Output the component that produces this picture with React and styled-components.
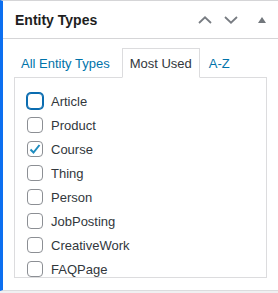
import React from "react";
import styled, { createGlobalStyle } from "styled-components";

const GlobalStyle = createGlobalStyle`
  html, body {
    margin: 0;
    padding: 0;
    background: #f0f0f1;
  }
  body {
    font-family: "Liberation Sans", Arial, sans-serif;
  }
`;

const types = [
  { name: "Article", focused: true },
  { name: "Product" },
  { name: "Course", checked: true },
  { name: "Thing" },
  { name: "Person" },
  { name: "JobPosting" },
  { name: "CreativeWork" },
  { name: "FAQPage" },
];

const App = () => {
  return (
    <>
      <GlobalStyle />
      <Box>
        <Header>
          <Title>Entity Types</Title>
          <Controls>
            <IconButton aria-label="Move up">
              <svg width="14" height="8" viewBox="0 0 14 8">
                <polyline points="1,7 7,1.3 13,7" fill="none" stroke="currentColor" strokeWidth="1.8" />
              </svg>
            </IconButton>
            <IconButton aria-label="Move down">
              <svg width="14" height="8" viewBox="0 0 14 8">
                <polyline points="1,1 7,6.7 13,1" fill="none" stroke="currentColor" strokeWidth="1.8" />
              </svg>
            </IconButton>
            <IconButton aria-label="Toggle panel" $small>
              <svg width="8" height="6" viewBox="0 0 8 6">
                <polygon points="4,0 8,6 0,6" fill="currentColor" />
              </svg>
            </IconButton>
          </Controls>
        </Header>
        <Body>
          <Tabs>
            <Tab>All Entity Types</Tab>
            <Tab $active>Most Used</Tab>
            <Tab>A-Z</Tab>
          </Tabs>
          <Panel>
            {types.map((t) => (
              <Row key={t.name}>
                <Check $focused={t.focused}>
                  {t.checked && (
                    <svg width="14" height="14" viewBox="0 0 14 14">
                      <polyline points="2.5,7.5 5.5,10.5 11.5,3" fill="none" stroke="#1e8cbe" strokeWidth="2" />
                    </svg>
                  )}
                </Check>
                <Label>{t.name}</Label>
              </Row>
            ))}
          </Panel>
        </Body>
      </Box>
    </>
  );
};

const Box = styled.div`
  background: #fff;
  border-left: 3px solid #0c6ff0;
  border-top: 1px solid #d5d5d7;
  border-bottom: 1px solid #dcdcde;
`;
const Header = styled.div`
  height: 37px;
  display: flex;
  align-items: center;
  justify-content: space-between;
  padding: 0 12px 0 12px;
  border-bottom: 1px solid #d5d5d7;
`;
const Title = styled.h2`
  margin: 0;
  font-size: 14px;
  font-weight: 700;
  color: #1e1e1e;
`;
const Controls = styled.div`
  display: flex;
  align-items: center;
  gap: 12px;
`;
const IconButton = styled.button`
  border: 0;
  background: none;
  padding: 0;
  margin-left: ${(p) => (p.$small ? "8px" : "0")};
  color: ${(p) => (p.$small ? "#72777c" : "#787c82")};
  display: flex;
  align-items: center;
`;
const Body = styled.div`
  padding: 9px 11px 12px 11px;
`;
const Tabs = styled.div`
  display: flex;
  align-items: flex-end;
  gap: 2px;
`;
const Tab = styled.div`
  height: 28px;
  display: flex;
  align-items: center;
  padding: 0 ${(p) => (p.$active ? "7px" : "6px")};
  margin-left: ${(p) => (p.$active ? "3px" : "0")};
  font-size: 13px;
  color: ${(p) => (p.$active ? "#32373c" : "#0073aa")};
  border: 1px solid ${(p) => (p.$active ? "#dcdcde" : "transparent")};
  border-bottom: 1px solid ${(p) => (p.$active ? "#fff" : "transparent")};
  margin-bottom: -1px;
  background: ${(p) => (p.$active ? "#fff" : "transparent")};
  position: relative;
  z-index: 1;
`;
const Panel = styled.div`
  height: 188px;
  overflow: hidden;
  border: 1px solid #dcdcde;
  padding: 11px 12px 0 12px;
`;
const Row = styled.div`
  height: 24px;
  display: flex;
  align-items: center;
  gap: 8px;
`;
const Check = styled.span`
  width: 16px;
  height: 16px;
  box-sizing: border-box;
  border-radius: 4px;
  background: #fff;
  border: 1px solid ${(p) => (p.$focused ? "#0a6cb0" : "#8c8f94")};
  box-shadow: ${(p) => (p.$focused ? "0 0 0 1px #0a6cb0" : "none")};
  display: flex;
  align-items: center;
  justify-content: center;
  flex-shrink: 0;
`;
const Label = styled.span`
  font-size: 13px;
  color: #32373c;
`;

export default App;
